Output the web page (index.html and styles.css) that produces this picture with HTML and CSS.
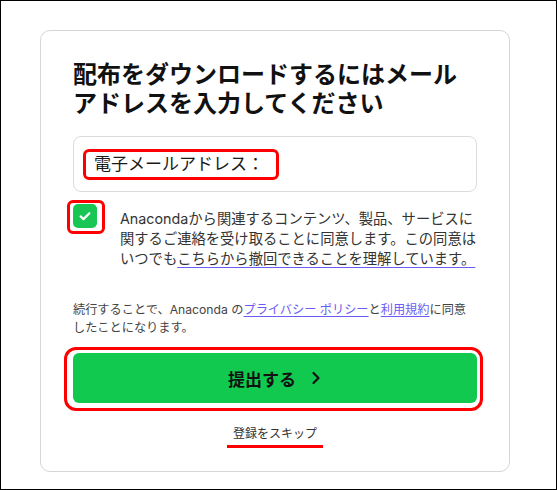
FILE: index.html
```html
<!DOCTYPE html>
<html lang="ja">
<head>
    <meta charset="UTF-8">
    <meta name="viewport" content="width=device-width, initial-scale=1.0">
    <title>Anaconda</title>
    <link rel="stylesheet" href="styles.css">
</head>
<body>
    <div class="frame">
        <div class="card">
            <h1 class="title">配布をダウンロードするにはメールアドレスを入力してください</h1>

            <div class="email-field">
                <span class="mark label">電子メールアドレス：</span>
            </div>

            <div class="consent">
                <div class="mark check-mark">
                    <span class="checkbox">
                        <svg width="14" height="14" viewBox="0 0 14 14">
                            <path d="M2.6 7.4l2.9 2.7L11.4 4.2" fill="none" stroke="#fff" stroke-width="2.2" stroke-linecap="round" stroke-linejoin="round"/>
                        </svg>
                    </span>
                </div>
                <p class="consent-text">Anacondaから関連するコンテンツ、製品、サービスに関するご連絡を受け取ることに同意します。この同意はいつでも<span class="soft-link">こちらから撤回できることを理解しています。</span></p>
            </div>

            <p class="terms">続行することで、Anaconda の<a href="#">プライバシー ポリシー</a>と<a href="#">利用規約</a>に同意したことになります。</p>

            <div class="mark submit-wrap">
                <button class="submit">提出する
                    <svg width="12" height="14" viewBox="0 0 12 14">
                        <path d="M3.5 2l5 5-5 5" fill="none" stroke="#111" stroke-width="2.2" stroke-linecap="round" stroke-linejoin="round"/>
                    </svg>
                </button>
            </div>

            <div class="skip">
                <span class="skip-link">登録をスキップ</span>
            </div>
        </div>
    </div>
</body>
</html>
```

FILE: styles.css
```css
* {
    box-sizing: border-box;
}
body {
    margin: 0;
    font-family: Inter, "Noto Sans CJK JP", sans-serif;
    color: #2b2b2b;
    background: #fff;
}
.frame {
    height: 100vh;
    border: 1px solid #000;
    padding: 29px 0 0 39px;
}
.card {
    width: 470px;
    border: 1px solid #d6d6d6;
    border-radius: 10px;
    padding: 29px 32px 23px;
}
.title {
    margin: 0;
    font-size: 24px;
    line-height: 29px;
    font-weight: 700;
    color: #111;
}
.email-field {
    margin-top: 18px;
    height: 56px;
    border: 1px solid #dcdcdc;
    border-radius: 8px;
    display: flex;
    align-items: center;
    padding-left: 9px;
}
.mark {
    border: 3px solid #f00;
    border-radius: 6px;
}
.label {
    width: 196px;
    height: 31px;
    padding-left: 8px;
    font-size: 17px;
    line-height: 25px;
    color: #1a1a1a;
}
.consent {
    display: flex;
    margin-top: 8px;
    margin-left: -6px;
}
.check-mark {
    flex: none;
    width: 38px;
    height: 34px;
    padding: 1px 0 0 3px;
}
.checkbox {
    width: 24px;
    height: 24px;
    border-radius: 5px;
    background: #17c653;
    display: flex;
    align-items: center;
    justify-content: center;
}
.consent-text {
    margin: 9px 0 0 15px;
    font-size: 14.3px;
    line-height: 20px;
    color: #333;
}
.soft-link {
    text-decoration: underline;
    text-decoration-color: #6a5cf5;
    text-underline-offset: 3px;
}
.terms {
    margin: 32px 0 0;
    font-size: 12.2px;
    line-height: 18px;
    color: #444;
}
.terms a {
    color: #6a5cf5;
    text-underline-offset: 2px;
}
.submit-wrap {
    margin: 10px -6px 0 -9px;
    padding: 3px 3px 5px 6px;
    border-radius: 12px;
}
.submit {
    width: 100%;
    height: 50px;
    border: none;
    border-radius: 6px;
    background: #10c94e;
    color: #111;
    font-family: inherit;
    font-size: 17px;
    font-weight: 700;
    display: flex;
    align-items: center;
    justify-content: center;
    gap: 14px;
}
.skip {
    margin-top: 11px;
    text-align: center;
}
.skip-link {
    display: inline-block;
    padding: 0 6px 2px;
    border-bottom: 3px solid #f00;
    font-size: 12px;
    line-height: 18px;
    color: #333;
}
```
